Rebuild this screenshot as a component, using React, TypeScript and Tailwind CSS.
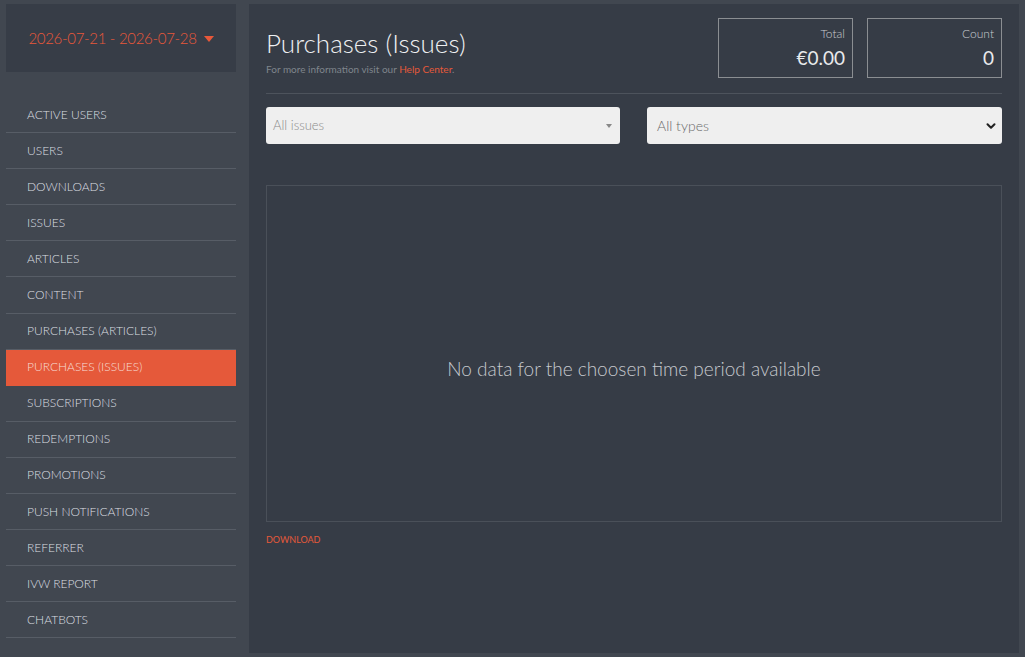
import { ChevronDown } from 'lucide-react';

const navItems = [
  'ACTIVE USERS',
  'USERS',
  'DOWNLOADS',
  'ISSUES',
  'ARTICLES',
  'CONTENT',
  'PURCHASES (ARTICLES)',
  'PURCHASES (ISSUES)',
  'SUBSCRIPTIONS',
  'REDEMPTIONS',
  'PROMOTIONS',
  'PUSH NOTIFICATIONS',
  'REFERRER',
  'IVW REPORT',
  'CHATBOTS',
];

const active = 'PURCHASES (ISSUES)';

function StatBox({ label, value }: { label: string; value: string }) {
  return (
    <div className="w-[135px] h-[60px] border border-[#8b8e92] flex flex-col items-end pr-[7px] pt-[8px]">
      <span className="text-[12px] leading-[14px] font-light text-[#c9ccd0]">{label}</span>
      <span className="text-[19px] leading-[24px] mt-[5px] text-[#e8eaec]">{value}</span>
    </div>
  );
}

export default function App() {
  return (
    <div
      className="w-[1025px] h-[657px] bg-[#414750] flex overflow-hidden"
      style={{ fontFamily: '"Source Sans Pro", Lato, "Noto Sans", sans-serif' }}
    >
      {/* sidebar */}
      <aside className="w-[249px] shrink-0 pt-[4px] pl-[6px] pr-[13px]">
        <div className="h-[68px] bg-[#373d47] flex items-center justify-center gap-[7px]">
          <span className="text-[15px] tracking-[-0.3px] font-light text-[#e8583a]">2026-07-21 - 2026-07-28</span>
          <svg width="10" height="6" viewBox="0 0 10 6" className="mt-[1px]">
            <path d="M0 0h10L5 6z" fill="#e8583a" />
          </svg>
        </div>
        <nav className="mt-[25px]">
          {navItems.map((item) => (
            <div
              key={item}
              className={
                item === active
                  ? 'h-[36.1px] flex items-center pl-[21px] text-[12px] font-light text-[#f6dcd4] bg-[#e5593a] border-b border-[#e5593a]'
                  : 'h-[36.1px] flex items-center pl-[21px] text-[12px] font-light text-[#dcdfe2] border-b border-[#575d66]'
              }
            >
              {item}
            </div>
          ))}
        </nav>
      </aside>

      {/* main */}
      <main className="w-[770px] h-[649px] mt-[4px] bg-[#363c46] px-[17px] pt-[14px]">
        <div className="flex justify-between items-start pb-[15px] border-b border-[#4d535c]">
          <div className="pt-[10px]">
            <h1 className="text-[26px] leading-[30px] font-light text-[#eef0f2]">Purchases (Issues)</h1>
            <p className="text-[10px] leading-[14px] text-[#7f858c] mt-[4px]">
              For more information visit our <span className="text-[#e5593a]">Help Center</span>.
            </p>
          </div>
          <div className="flex gap-[14px]">
            <StatBox label="Total" value="€0.00" />
            <StatBox label="Count" value="0" />
          </div>
        </div>

        <div className="flex justify-between mt-[13px]">
          <div className="w-[354px] h-[37px] bg-[#efefef] rounded-[3px] flex items-center justify-between pl-[7px] pr-[8px]">
            <span className="text-[13px] font-light text-[#8a8a8a]">All issues</span>
            <svg width="6" height="4" viewBox="0 0 6 4">
              <path d="M0 0h6L3 4z" fill="#888" />
            </svg>
          </div>
          <div className="w-[355px] h-[37px] bg-[#efefef] rounded-[3px] flex items-center justify-between pl-[10px] pr-[4px]">
            <span className="text-[14px] font-light text-[#6a6a6a]">All types</span>
            <ChevronDown size={14} strokeWidth={3.5} color="#222" />
          </div>
        </div>

        <div className="mt-[41px] h-[337px] border border-[#4a5059] flex items-center justify-center pt-[32px]">
          <span className="text-[19px] font-light text-[#c6c9ce]">No data for the choosen time period available</span>
        </div>

        <div className="mt-[11px] text-[9px] text-[#e5593a]">DOWNLOAD</div>
      </main>
    </div>
  );
}
